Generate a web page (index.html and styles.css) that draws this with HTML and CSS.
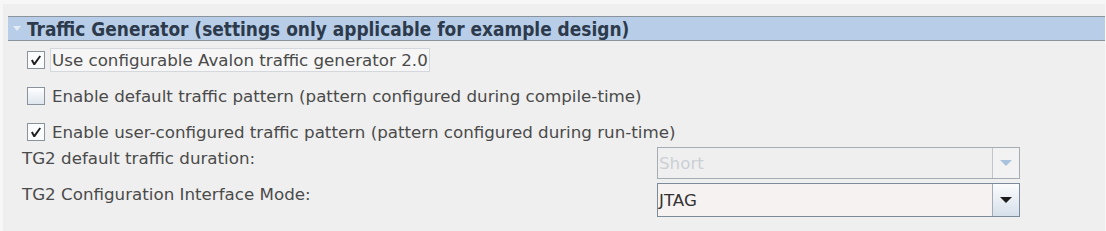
FILE: index.html
```html
<!DOCTYPE html>
<html lang="en">
<head>
    <meta charset="UTF-8">
    <title>Traffic Generator</title>
    <link rel="stylesheet" href="styles.css">
</head>
<body>
    <div class="panel">
        <div class="section-head">
            <span class="twisty"></span>
            <span class="section-title">Traffic Generator (settings only applicable for example design)</span>
        </div>
        <div class="section-body">
            <label class="check-row">
                <span class="box">
                    <svg width="12" height="12" viewBox="0 0 12 12"><path d="M1 6.5 L3.5 11 L5 11 L11 2.5 L9.5 1.5 L4.3 8.5 L2.8 5.5 Z" fill="#1e1e1e"/></svg>
                </span>
                <span class="check-text focused">Use configurable Avalon traffic generator 2.0</span>
            </label>
            <label class="check-row">
                <span class="box empty"></span>
                <span class="check-text">Enable default traffic pattern (pattern configured during compile-time)</span>
            </label>
            <label class="check-row">
                <span class="box">
                    <svg width="12" height="12" viewBox="0 0 12 12"><path d="M1 6.5 L3.5 11 L5 11 L11 2.5 L9.5 1.5 L4.3 8.5 L2.8 5.5 Z" fill="#1e1e1e"/></svg>
                </span>
                <span class="check-text">Enable user-configured traffic pattern (pattern configured during run-time)</span>
            </label>

            <div class="fields">
                <span class="field-label">TG2 default traffic duration:</span>
                <div class="combo disabled">
                    <span class="combo-value">Short</span>
                    <span class="combo-btn"><span class="arrow"></span></span>
                </div>
                <span class="field-label">TG2 Configuration Interface Mode:</span>
                <div class="combo">
                    <span class="combo-value">JTAG</span>
                    <span class="combo-btn"><span class="arrow"></span></span>
                </div>
            </div>
        </div>
    </div>
</body>
</html>
```

FILE: styles.css
```css
html, body {
    margin: 0; padding: 0;
    background: #f7f7f7;
}

.panel {
    margin: 4px 1px 0 3px;
    height: 227px;
    background: #efefef;
    padding-top: 12px;
    box-sizing: border-box;
    font-family: "DejaVu Sans", sans-serif;
    font-size: 16.7px;
    color: #4a4a4a;
}

.section-head {
    display: flex;
    align-items: center;
    margin-left: 5px;
    height: 25px;
    border-top: 1px solid #8b939b;
    border-bottom: 1px solid #8b939b;
    background: #b8cde7;
    box-sizing: border-box;
    overflow: hidden;
}
    .twisty {
        width: 0; height: 0;
        margin: 0 6px 0 5px;
        border-left: 4px solid transparent;
        border-right: 4px solid transparent;
        border-top: 5px solid #e4ebf3;
    }
    .section-title {
        font: bold 18.9px "DejaVu Sans Condensed", "DejaVu Sans", sans-serif;
        color: #2c3a4b;
    }

.section-body {
    padding: 1px 0 0 19px;
}

.check-row {
    display: flex;
    align-items: center;
    height: 36px;
    margin-left: 5px;
}
    .box {
        display: flex;
        align-items: center;
        justify-content: center;
        width: 16px; height: 16px;
        border: 1px solid #8a929c;
        background: #fbfcfd;
        margin-right: 5px;
    }
    .box.empty {
        background: linear-gradient(#fdfeff, #dfe6ee);
    }
    .check-text {
        padding: 1px 1px;
        border: 1px solid transparent;
    }
    .check-text.focused {
        border-color: #d4d8dc;
        background: #f6f6f6;
    }

.fields {
    display: grid;
    grid-template-columns: 635px 363px;
    grid-template-rows: 32px 34px;
    row-gap: 4px;
    margin-top: -3px;
}
    .field-label {
        line-height: 20px;
        padding-top: 1px;
    }

.combo {
    display: flex;
    height: 100%;
    border: 1px solid #7c8b9b;
    box-sizing: border-box;
    background: #f7f2f2;
}
    .combo-value {
        flex: 1;
        display: flex;
        align-items: center;
        padding-left: 1px;
        color: #333;
        border-right: 1px solid #a3acb6;
    }
    .combo-btn {
        width: 26px;
        display: flex;
        align-items: center;
        justify-content: center;
        background: linear-gradient(#fbfcfd, #d6e0ea);
    }
    .arrow {
        width: 0; height: 0;
        border-left: 6px solid transparent;
        border-right: 6px solid transparent;
        border-top: 6px solid #1c1c1c;
    }

.combo.disabled {
    border-color: #a4acb4;
    background: #efefef;
}
    .combo.disabled .combo-value {
        color: #cbd0d5;
        border-right-color: #c0c6cc;
    }
    .combo.disabled .combo-btn {
        background: #f2f2f2;
    }
    .combo.disabled .arrow {
        border-top-color: #a9c3df;
    }
```
